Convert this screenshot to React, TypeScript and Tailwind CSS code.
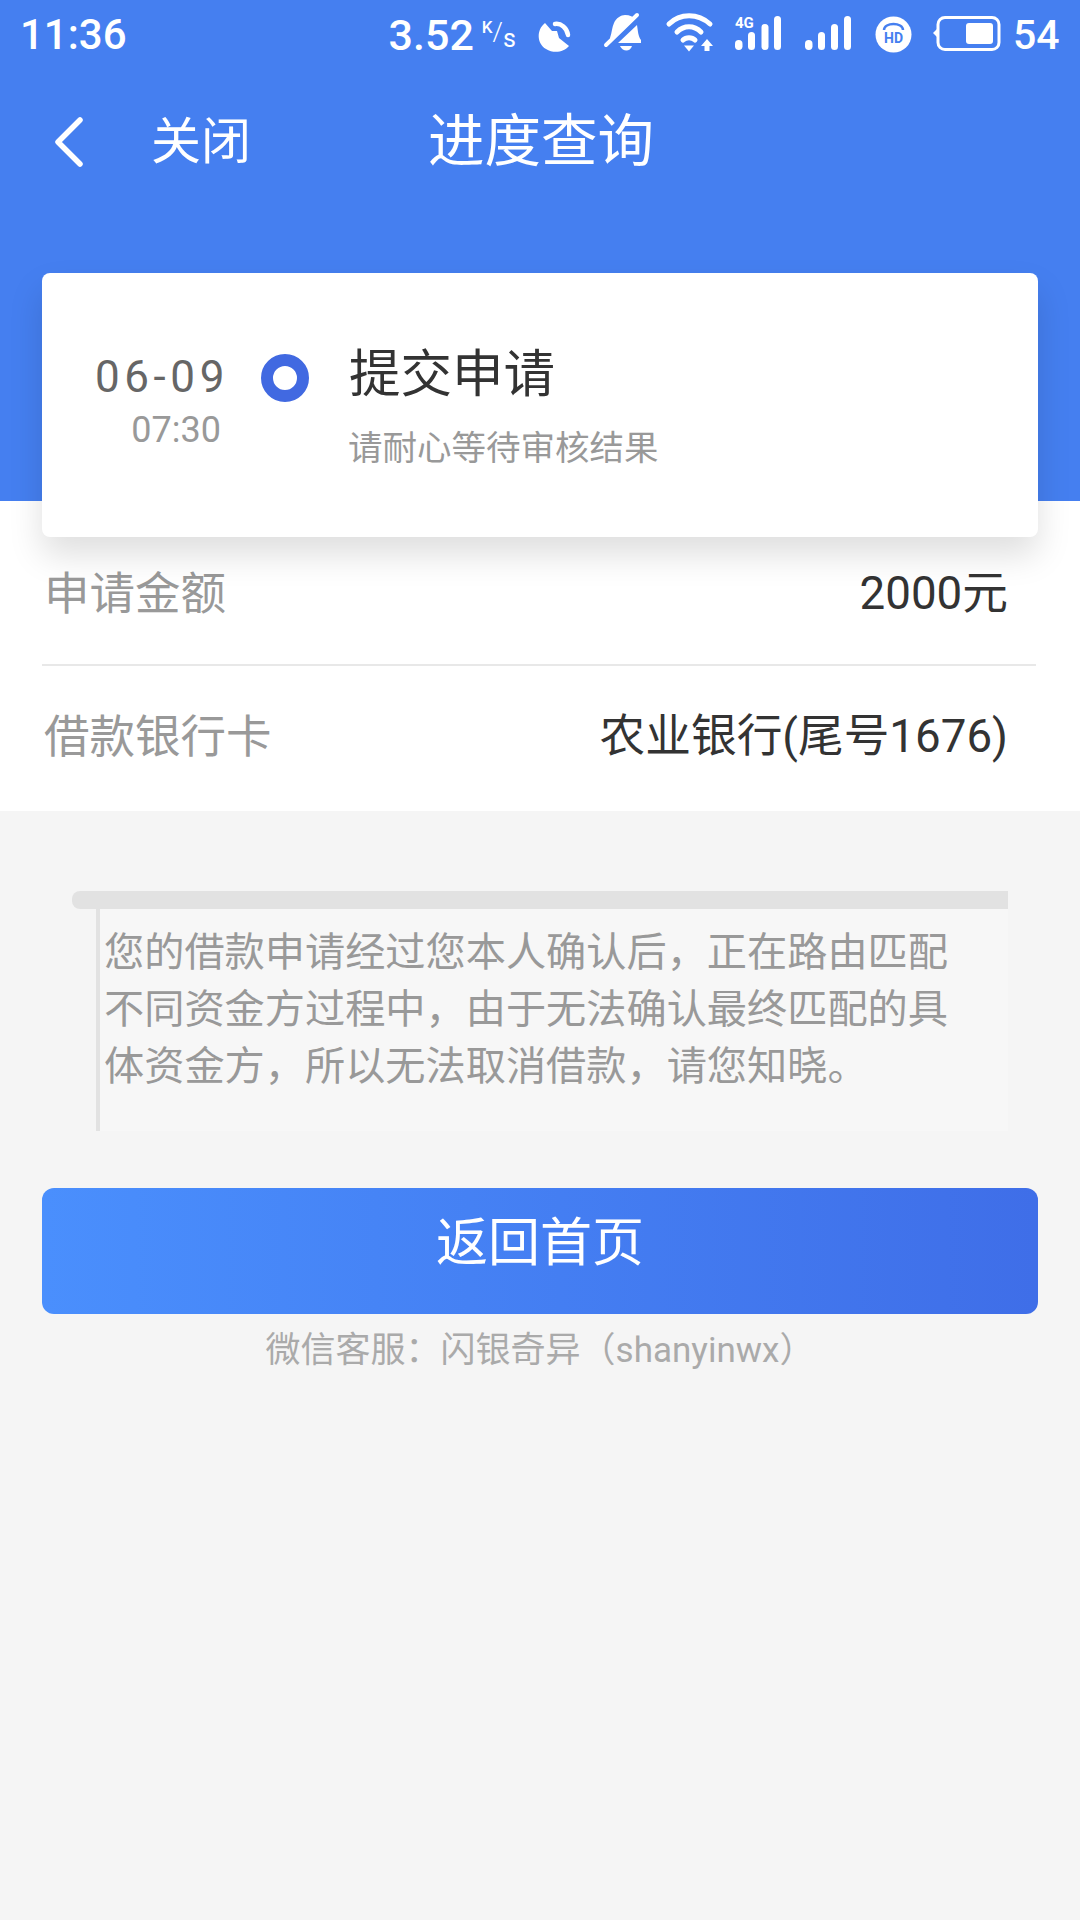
const FONT = "font-['Roboto','Noto_Sans_CJK_SC',sans-serif]";

function StatusIcons() {
  return (
    <svg width="540" height="70" viewBox="0 0 540 70" fill="white" className="block overflow-visible">
      {/* dish */}
      <path d="M5 23 C-4 30 -3 44 6 49 C14 54 24 52 29 46 L19 38 L17 31 L12 31 Z" />
      <path d="M15 24 C21 23 27 28 28 35" fill="none" stroke="white" strokeWidth="4.5" strokeLinecap="round" />
      {/* muted bell */}
      <path d="M70 38 C72 32 72 27 74 23 C76 18 81 15 85 15 C90 15 93 17 96 19 L70 42 Z" />
      <path d="M97 25 C98 31 98 36 101 40 L101 43 L78 43 Z" />
      <path d="M80 46 L92 46 C90 52 83 52 80 46 Z" />
      <path d="M69 46 L99 18" stroke="#457ff0" strokeWidth="4" />
      <path d="M66 45 L97 15" stroke="white" strokeWidth="4" strokeLinecap="round" />
      {/* wifi */}
      <path d="M129 24 C140 13 158 13 170 24" fill="none" stroke="white" strokeWidth="5" strokeLinecap="round" />
      <path d="M137 32 C144 25 154 25 161 32" fill="none" stroke="white" strokeWidth="5" strokeLinecap="round" />
      <path d="M143 40 C146 37 152 37 155 40" fill="none" stroke="white" strokeWidth="5" strokeLinecap="round" />
      <path d="M144 45.5 L154 45.5 L149 51.5 Z" />
      <path d="M167 39 L173 46 L169.5 46 L169.5 51 L164.5 51 L164.5 46 L161 46 Z" />
      {/* 4G signal */}
      <text x="195" y="28" fontFamily="Roboto" fontSize="15" fontWeight="700">4G</text>
      <rect x="195" y="40" width="7.5" height="10" rx="3.7" />
      <rect x="208" y="32" width="7" height="18" rx="3.5" />
      <rect x="221.5" y="24" width="7" height="26" rx="3.5" />
      <rect x="234" y="16" width="7" height="34" rx="3.5" />
      {/* signal */}
      <rect x="265" y="40" width="7.5" height="10" rx="3.7" />
      <rect x="278" y="32" width="7" height="18" rx="3.5" />
      <rect x="291" y="24" width="7" height="26" rx="3.5" />
      <rect x="304" y="16" width="7" height="34" rx="3.5" />
      {/* HD call */}
      <circle cx="353.5" cy="34.5" r="18" />
      <path d="M344 30 C344 22 363 22 363 30" fill="none" stroke="#457ff0" strokeWidth="2.5" />
      <text x="353.5" y="43" textAnchor="middle" fontFamily="Roboto" fontSize="14" fontWeight="700" fill="#457ff0">HD</text>
      {/* battery */}
      <path d="M397 29 L393 33 L397 37 Z" />
      <rect x="398" y="17.5" width="61" height="32" rx="7" fill="none" stroke="white" strokeWidth="3" />
      <rect x="426" y="23" width="27" height="21" rx="3" />
    </svg>
  );
}

export default function App() {
  return (
    <div className={`${FONT} flex min-h-[1920px] w-[1080px] flex-col bg-[#f5f5f5]`}>
      <header className="relative z-10 h-[501px] bg-[#457ff0] text-white">
        <div className="relative flex h-[70px] items-center pl-[20px] text-[42px] leading-none font-medium">
          <span>11:36</span>
          <span className="ml-[262px] text-[43px]">3.52</span>
          <div className="ml-[8px] flex self-stretch leading-none">
            <span className="mt-[19px] text-[17px] font-medium">K</span>
            <span className="mt-[19px] text-[26px] font-light">/</span>
            <span className="mt-[26px] text-[25px] font-normal">s</span>
          </div>
          <div className="absolute top-0 left-[540px]">
            <StatusIcons />
          </div>
          <span className="absolute left-[1013px] text-[41px]">54</span>
        </div>

        <div className="flex h-[144px] items-center">
          <svg width="32" height="52" viewBox="0 0 32 52" fill="none" stroke="white" strokeWidth="5.5" strokeLinecap="round" strokeLinejoin="round" className="ml-[52px]">
            <path d="M28 4 L6 26 L28 48" />
          </svg>
          <span className="ml-[67px] text-[50px] leading-none">关闭</span>
          <span className="ml-[177px] text-[56.5px] leading-none">进度查询</span>
        </div>

        <section className="mx-[42px] mt-[59px] flex h-[264px] rounded-[8px] bg-white pt-[70px] shadow-[0_18px_34px_rgba(0,0,0,0.13)]">
          <div className="ml-[53px] flex w-[134px] flex-col items-end">
            <span className="text-[44px] leading-[68px] tracking-[4.6px] whitespace-nowrap text-[#666666]">06-09</span>
            <span className="mt-[-3px] mr-[8px] text-[36px] leading-[44px] text-[#999999]">07:30</span>
          </div>
          <div className="mt-[11px] ml-[32px] box-border size-[48px] rounded-full border-[12px] border-[#4169e1] bg-white" />
          <div className="ml-[41px] flex flex-col">
            <span className="mt-[2px] ml-[-1px] text-[51.5px] leading-[60px] text-[#333333]">提交申请</span>
            <span className="mt-[-1px] ml-[-2px] text-[34.5px] leading-[88px] text-[#999999]">请耐心等待审核结果</span>
          </div>
        </section>
      </header>

      <section className="h-[310px] bg-white px-[42px] pt-[36px] text-[45.5px] leading-none">
        <div className="mr-[2px] flex h-[129px] justify-between border-b-2 border-[#e8e8e8] pt-[35px] pr-[28px]">
          <span className="ml-[2px] text-[#999999]">申请金额</span>
          <span className="mt-[-1px] text-[45.7px] text-[#333333]">2000元</span>
        </div>
        <div className="flex justify-between pt-[49px] pr-[30px]">
          <span className="ml-[2px] text-[#999999]">借款银行卡</span>
          <span className="mt-[-1px] text-[45.7px] text-[#333333]">农业银行(尾号1676)</span>
        </div>
      </section>

      <section className="mt-[80px] ml-[72px] w-[936px]">
        <div className="h-[18px] rounded-l-[8px] bg-[#e2e2e2]" />
        <div className="ml-[24px] h-[222px] border-l-[4px] border-[#e2e2e2] bg-[#f7f7f7] pt-[15px] pl-[4px] text-[40.2px] leading-[57px] text-[#999999]">
          您的借款申请经过您本人确认后，正在路由匹配
          <br />
          不同资金方过程中，由于无法确认最终匹配的具
          <br />
          体资金方，所以无法取消借款，请您知晓。
        </div>
      </section>

      <button
        type="button"
        className="mx-[42px] mt-[57px] h-[126px] rounded-[12px] bg-gradient-to-r from-[#4a8ffd] to-[#3f6ee8] pb-[15px] text-[52px] leading-none text-white"
      >
        返回首页
      </button>

      <p className="mt-[17px] text-center text-[35px] leading-[40px] text-[#aaaaaa]">微信客服：闪银奇异（shanyinwx）</p>
    </div>
  );
}
